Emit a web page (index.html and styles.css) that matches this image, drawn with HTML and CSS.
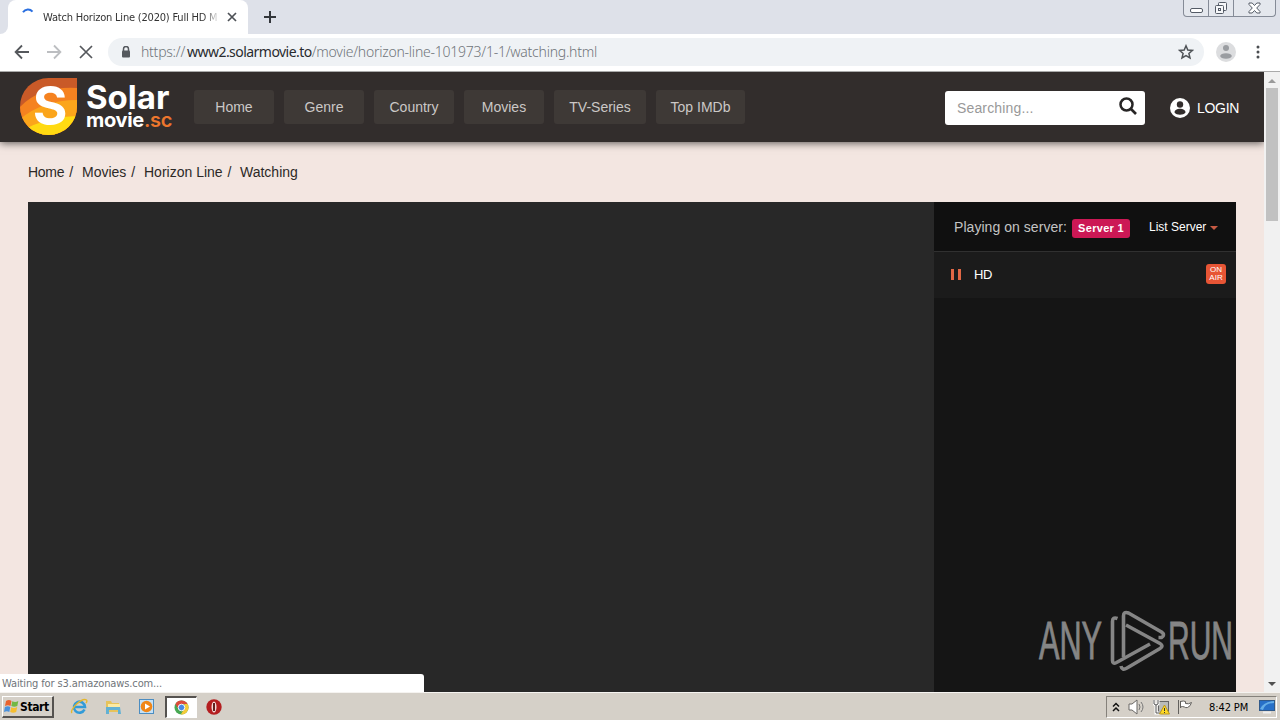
FILE: index.html
```html
<!DOCTYPE html>
<html lang="en">
<head>
    <meta charset="UTF-8">
    <meta name="viewport" content="width=device-width, initial-scale=1.0">
    <title>Watch Horizon Line (2020) Full HD Movie</title>
    <link rel="stylesheet" href="styles.css">
</head>
<body>
    <!-- Browser tabs -->
    <div class="tab-strip">
        <div class="tab-edge"></div>
        <div class="tab">
            <svg class="spinner" width="14" height="14" viewBox="0 0 14 14"><path d="M2 4.2A6 6 0 0 1 11.500 3.600" fill="none" stroke="#2a6fe0" stroke-width="2"/></svg>
            <span class="tab-title">Watch Horizon Line (2020) Full HD M</span>
            <svg width="10" height="10" viewBox="0 0 10 10"><path d="M1 1l8 8M9 1l-8 8" stroke="#4d5156" stroke-width="1.7"/></svg>
        </div>
        <svg class="new-tab" width="12" height="12" viewBox="0 0 12 12"><path d="M6 0v12M0 6h12" stroke="#33363b" stroke-width="2"/></svg>
        <div class="window-buttons">
            <span class="win-min"><svg width="13" height="6" viewBox="0 0 13 6"><rect x=".5" y=".5" width="12" height="4" rx="1.500" fill="#fff" stroke="#545b66"/></svg></span>
            <span class="win-max"><svg width="14" height="14" viewBox="0 0 14 14"><g fill="#f6f7f9" stroke="#545b66"><rect x="4.500" y="1.500" width="8" height="8" rx="1"/><rect x="1.500" y="4.500" width="8" height="8" rx="1"/><rect x="4.500" y="7.500" width="2" height="2"/></g></svg></span>
            <span class="win-close"><svg width="13" height="12" viewBox="0 0 13 12"><path d="M1 1h3.200l2.300 2.500L8.800 1H12v1.500L8.700 6 12 9.500V11H8.800L6.500 8.500 4.200 11H1V9.500L4.300 6 1 2.500z" fill="#fff" stroke="#545b66"/></svg></span>
        </div>
    </div>

    <!-- Address bar -->
    <div class="toolbar">
        <svg class="nav-icon" width="16" height="16" viewBox="0 0 16 16"><path d="M15 8H2M8 1.500L1.600 8 8 14.500" fill="none" stroke="#55585c" stroke-width="1.800"/></svg>
        <svg class="nav-icon" width="16" height="16" viewBox="0 0 16 16"><path d="M1 8h13M8 1.500L14.400 8 8 14.500" fill="none" stroke="#bcbec1" stroke-width="1.800"/></svg>
        <svg class="nav-icon" width="16" height="16" viewBox="0 0 16 16"><path d="M2 2l12 12M14 2L2 14" stroke="#55585c" stroke-width="1.700"/></svg>
        <div class="omnibox">
            <svg width="10" height="12" viewBox="0 0 10 12"><path d="M2.500 5V3a2.500 2.500 0 0 1 5 0v2" fill="none" stroke="#55595e" stroke-width="1.500"/><rect x="1" y="4.500" width="8" height="7" rx="1" fill="#55595e"/></svg>
            <span class="url">https://<b>www2.solarmovie.to</b>/movie/horizon-line-101973/1-1/watching.html</span>
            <svg class="star" width="16" height="16" viewBox="0 0 16 16"><path d="M8 1.800l1.800 4.200 4.600.4-3.500 3 1.100 4.500L8 11.500l-4 2.400 1.100-4.500-3.500-3 4.600-.4z" fill="none" stroke="#4f5357" stroke-width="1.500"/></svg>
        </div>
        <svg class="profile" width="20" height="20" viewBox="0 0 20 20"><circle cx="10" cy="10" r="10" fill="#dcdddf"/><circle cx="10" cy="6" r="3" fill="#9a9da1"/><ellipse cx="10" cy="14" rx="5.800" ry="2.800" fill="#9a9da1"/></svg>
        <svg class="menu-dots" width="4" height="14" viewBox="0 0 4 14"><g fill="#4a4d51"><circle cx="2" cy="2" r="1.500"/><circle cx="2" cy="7" r="1.500"/><circle cx="2" cy="12" r="1.500"/></g></svg>
    </div>

    <div class="viewport">
        <div class="page">
            <header class="header">
                <div class="logo">
                    <svg width="58" height="58" viewBox="0 0 58 58">
                        <defs>
                            <clipPath id="drop"><path d="M29.500 0H58v28.500A28.500 28.500 0 1 1 29.500 0z"/></clipPath>
                        </defs>
                        <g clip-path="url(#drop)">
                            <rect width="58" height="58" fill="#c95a28"/>
                            <path d="M0 30Q20 8 58 10v48H0z" fill="#f58220"/>
                            <path d="M0 42Q23 22 58 22v36H0z" fill="#fba51b"/>
                            <path d="M0 54Q29 38 58 38v20H0z" fill="#ffda12"/>
                        </g>
                        <text class="logo-letter" x="31" y="47" text-anchor="middle">S</text>
                    </svg>
                    <div class="logo-text">
                        <div class="logo-top">Solar</div>
                        <div class="logo-bottom">movie<span>.sc</span></div>
                    </div>
                </div>
                <nav class="nav">
                    <a>Home</a>
                    <a>Genre</a>
                    <a>Country</a>
                    <a>Movies</a>
                    <a class="wide">TV-Series</a>
                    <a class="imdb">Top IMDb</a>
                </nav>
                <div class="search">
                    <span>Searching...</span>
                    <svg width="18" height="18" viewBox="0 0 18 18"><circle cx="7.500" cy="7.500" r="6" fill="none" stroke="#272525" stroke-width="2.500"/><path d="M12 12l5 5" stroke="#272525" stroke-width="2.600"/></svg>
                </div>
                <div class="login">
                    <svg width="20" height="20" viewBox="0 0 20 20"><circle cx="10" cy="10" r="10" fill="#fff"/><circle cx="10" cy="6.500" r="3.200" fill="#322d2c"/><path d="M4.500 14.500c0-5 11-5 11 0-2 3-9 3-11 0z" fill="#322d2c"/></svg>
                    <span>LOGIN</span>
                </div>
            </header>

            <div class="breadcrumb">
                <span class="crumb-home">Home</span><span class="crumb-movies">Movies</span><span class="crumb-title">Horizon Line</span><span class="crumb-last">Watching</span>
            </div>

            <main class="player">
                <div class="video"></div>
                <aside class="servers">
                    <div class="server-head">
                        <span class="playing">Playing on server:</span>
                        <span class="badge">Server 1</span>
                        <span class="list-server">List Server</span>
                        <span class="caret"></span>
                    </div>
                    <div class="episode">
                        <span class="pause"></span>
                        <span class="quality">HD</span>
                        <span class="on-air">ON<br>AIR</span>
                    </div>
                </aside>
            </main>
        </div>
        <div class="scrollbar">
            <span class="arrow-up"></span>
            <div class="thumb"></div>
            <span class="arrow-down"></span>
        </div>

        <div class="status">Waiting for s3.amazonaws.com...</div>

        <svg class="watermark" width="198" height="64" viewBox="0 0 198 64">
            <g class="watermark-text">
                <text x="1" y="50" textLength="63" lengthAdjust="spacingAndGlyphs">ANY</text>
                <text x="130" y="50" textLength="65" lengthAdjust="spacingAndGlyphs">RUN</text>
            </g>
            <g fill="none" stroke="#858585" stroke-width="3.600" stroke-linejoin="round">
                <path d="M79.500 9.500q-5-2-5 3v39q0 4 4 2L112 35"/>
                <path d="M85.500 48V7q0-5 5-3l33 19q4 3 0 5.500l-3 0"/>
                <path d="M88 16l34 18.500q4 2.500 0 5L89 59q-5 3-6-2"/>
            </g>
        </svg>
    </div>

    <!-- Taskbar -->
    <div class="taskbar">
        <div class="start">
            <svg width="15" height="15" viewBox="0 0 15 15"><path d="M2 2q3-2 5.500 0L6.500 7Q4 5.500 1 7z" fill="#e9622d"/><path d="M8.300 2.300q3 1.500 6-.3l-1 5q-3 1.500-6 0z" fill="#73b844"/><path d="M.9 8q3-1.700 5.400 0l-1 5Q3 11.500 0 13z" fill="#4a91dc"/><path d="M7.200 8.300q3 1.500 6-.3l-1 5q-3 1.500-6 0z" fill="#f6be30"/></svg>
            <b>Start</b>
        </div>
        <div class="quick">
            <svg width="18" height="18" viewBox="0 0 18 18"><path d="M14.500 11.500A5.500 5.500 0 1 1 15 9H5" fill="none" stroke="#329bd8" stroke-width="2.600"/><path d="M2 15C-1 12 12-1 16.500 2q1 1-.5 3" fill="none" stroke="#e5b72c" stroke-width="1.400"/></svg>
            <svg width="18" height="18" viewBox="0 0 18 18"><path d="M2 3h5l1 2h7v9H2z" fill="#e6c35c"/><path d="M4 6h12v6H4z" fill="#fbeaa3"/><path d="M2 9h14l1 7h-3v-4H5v4H2z" fill="#62b1d4"/></svg>
            <svg width="18" height="18" viewBox="0 0 18 18"><rect x="1.500" y="1.500" width="14" height="14" fill="#c5e1f6" stroke="#4c8dc1"/><circle cx="8.500" cy="8.500" r="5.800" fill="#f08618"/><path d="M7 5.500L12 8.500 7 11.500z" fill="#fff"/></svg>
        </div>
        <div class="active-task">
            <svg width="15" height="15" viewBox="0 0 16 16"><circle cx="8" cy="8" r="7.500" fill="#47a852"/><path d="M1.500 4.200A7.500 7.500 0 0 1 14.500 4.300H8L5 10z" fill="#dd4b3b"/><path d="M14.500 4.300A7.500 7.500 0 0 1 7.200 15.400L11 9V4.300z" fill="#f4cb39"/><circle cx="8" cy="8" r="3.500" fill="#4889e4" stroke="#fff"/></svg>
        </div>
        <svg class="opera" width="16" height="16" viewBox="0 0 16 16"><circle cx="8" cy="8" r="7.700" fill="#b41e20"/><ellipse cx="8" cy="8" rx="2.500" ry="5.500" fill="#f3dcda"/><path d="M8 4v8" stroke="#63201f" stroke-width="2"/></svg>
        <div class="tray">
            <svg width="8" height="11" viewBox="0 0 8 11"><path d="M1 4.500l3-3 3 3M1 9l3-3 3 3" fill="none" stroke="#111" stroke-width="1.500"/></svg>
            <svg class="speaker" width="18" height="16" viewBox="0 0 18 16"><path d="M1 5h3l5-4v14l-5-4H1z" fill="#fff" stroke="#6b6966"/><path d="M11 5q2 3 0 6M13 3q4 5 0 10" fill="none" stroke="#777"/></svg>
            <svg class="network" width="17" height="16" viewBox="0 0 17 16"><rect x="5.500" y="2.500" width="10" height="10" fill="#b9bbb9" stroke="#666"/><path d="M1 1v4q2 2 4 0V1M3 6v8h5" fill="none" stroke="#fff" stroke-width="3"/><path d="M1 1v4q2 2 4 0V1M3 6v8h5" fill="none" stroke="#555"/><path d="M11.500 6l5 9h-10z" fill="#ffda25" stroke="#bb971d"/><path d="M11.500 9v3M11.500 13v1" stroke="#333"/></svg>
            <svg class="flag" width="17" height="16" viewBox="0 0 17 16"><path d="M1.500 1v14M3.500 2v7M3.500 2.500q3-1 5 0v2q3 1 6-1-1 4-4 5-2 .5-3-.5-2-1-4 0z" fill="#fff" stroke="#62605d"/></svg>
            <span class="clock">8:42 PM</span>
            <svg class="desktop" width="16" height="14" viewBox="0 0 16 14"><rect x=".5" y=".5" width="15" height="10" fill="#2870c8" stroke="#315a8a"/><path d="M1 9Q4 2 15 1v2Q6 3 4 10z" fill="#66aee7"/><path d="M4 12.500h8" stroke="#eee" stroke-width="2"/></svg>
        </div>
    </div>
</body>
</html>
```
FILE: styles.css
```css
* {
    box-sizing: border-box;
}
body {
    width: 1280px;
    height: 720px;
    margin: 0;
    overflow: hidden;
    font-family: "Liberation Sans", Arial, sans-serif;
    font-size: 14px;
    white-space: nowrap;
}
svg {
    display: block;
    flex-shrink: 0;
}

/* Browser */
.tab-strip {
    display: flex;
    height: 34px;
    background: #dee1e9;
}
.tab-edge {
    width: 8px;
    background: #fff;
}
.tab-edge::before {
    content: "";
    display: block;
    height: 34px;
    background: #dee1e9;
    border-bottom-right-radius: 8px;
}
.tab {
    display: flex;
    align-items: center;
    width: 240px;
    padding: 0 11px 0 13px;
    background: #fff;
    border-radius: 8px 8px 0 0;
}
.spinner {
    margin-bottom: 4px;
}
.tab-title {
    width: 176px;
    margin: 0 8px;
    overflow: hidden;
    font-family: "DejaVu Sans Condensed", "DejaVu Sans", sans-serif;
    font-size: 11px;
    font-stretch: condensed;
    letter-spacing: -0.2px;
    color: #333;
    -webkit-mask-image: linear-gradient(to right, #000 160px, transparent 177px);
    mask-image: linear-gradient(to right, #000 160px, transparent 177px);
}
.tab svg:last-child {
    margin-left: auto;
}
.new-tab {
    margin: 11px 0 0 16px;
}
.window-buttons {
    display: flex;
    height: 17px;
    margin: 0 4px 0 auto;
    border: 1px solid #858b97;
    border-top: 0;
    border-radius: 0 0 4px 4px;
    background: #e4e7ed;
}
.window-buttons span {
    display: flex;
    justify-content: center;
    align-items: center;
    width: 25px;
    border-right: 1px solid #858b97;
}
.window-buttons .win-min {
    align-items: flex-end;
    padding-bottom: 2px;
}
.window-buttons .win-close {
    width: 41px;
    border: 0;
}
.toolbar {
    display: flex;
    align-items: center;
    height: 38px;
    padding: 0 20px 2px 14px;
    background: #fff;
    border-bottom: 1px solid #aaa;
}
.nav-icon {
    margin-right: 16px;
}
.omnibox {
    display: flex;
    align-items: center;
    width: 1096px;
    height: 28px;
    margin-left: -2px;
    padding: 0 10px 0 13px;
    background: #eff2f5;
    border-radius: 14px;
}
.url {
    margin-left: 10px;
    font-family: "Noto Sans", sans-serif;
    font-size: 14px;
    font-weight: 300;
    letter-spacing: -0.24px;
    color: #70757a;
}
.url > b {
    margin-left: 2px;
    font-weight: 400;
    letter-spacing: -0.54px;
    color: #292b2e;
}
.star {
    margin-left: auto;
}
.profile {
    margin-left: 12px;
}
.menu-dots {
    margin-left: auto;
}

/* Page */
.viewport {
    position: relative;
    display: flex;
    height: 620px;
    background: #f3e6e1;
}
.page {
    width: 1264px;
    overflow: hidden;
}
.header {
    display: flex;
    align-items: center;
    height: 70px;
    padding: 0 25px 0 19px;
    background: #322d2c;
    box-shadow: 0 1px 8px rgba(0, 0, 0, 0.65);
}
.logo {
    display: flex;
    width: 175px;
}
.logo-letter {
    font: 700 53px Inter, sans-serif;
    fill: #fff;
}
.logo-text {
    margin-left: 9px;
    font-family: Inter, sans-serif;
    font-weight: 700;
    color: #fff;
}
.logo-top {
    height: 30px;
    font-size: 33px;
    line-height: 39px;
}
.logo-bottom {
    font-size: 20px;
    line-height: 24px;
    letter-spacing: -0.3px;
}
.logo-bottom span {
    font-weight: 600;
    color: #ed762d;
}
.nav {
    display: flex;
    gap: 10px;
}
.nav a {
    width: 80px;
    height: 34px;
    background: #3e3936;
    border-radius: 3px;
    font-size: 14px;
    line-height: 34px;
    text-align: center;
    color: #cbc8c6;
}
.nav .wide {
    width: 92px;
}
.nav .imdb {
    width: 89px;
}
.search {
    display: flex;
    align-items: center;
    width: 200px;
    height: 34px;
    margin: 2px 0 0 auto;
    padding: 0 8px 0 12px;
    background: #fff;
    border-radius: 3px;
    letter-spacing: 0.15px;
    color: #999;
}
.search svg {
    margin: -4px 0 0 auto;
}
.login {
    display: flex;
    align-items: center;
    gap: 7px;
    width: 69px;
    margin: 2px 0 0 25px;
    color: #fff;
    letter-spacing: -0.3px;
}
.breadcrumb {
    display: flex;
    height: 60px;
    padding-left: 28px;
    line-height: 60px;
    color: #2c2927;
}
.breadcrumb span:not(:last-child)::after {
    content: "/";
    margin-left: 5px;
}
.breadcrumb .crumb-home {
    width: 54px;
    letter-spacing: -0.3px;
}
.crumb-movies {
    width: 62px;
}
.crumb-title {
    width: 96px;
}
.player {
    display: flex;
    width: 1208px;
    height: 490px;
    margin-left: 28px;
}
.video {
    width: 906px;
    background: #282828;
}
.servers {
    width: 302px;
    background: #151515;
}
.server-head {
    display: flex;
    align-items: center;
    height: 50px;
    padding-left: 20px;
    background: #101010;
    border-bottom: 1px solid #303030;
    color: #c4c4c4;
}
.playing {
    width: 118px;
    letter-spacing: 0.05px;
}
.badge {
    width: 58px;
    height: 19px;
    margin-top: 3px;
    background: #cc1855;
    border-radius: 3px;
    font-size: 11px;
    font-weight: bold;
    line-height: 19px;
    letter-spacing: 0.3px;
    text-align: center;
    color: #fff;
}
.list-server {
    width: 59px;
    margin-left: 19px;
    font-size: 12px;
    color: #fff;
}
.caret {
    margin: 2px 0 0 2px;
    border: 4px solid transparent;
    border-top-color: #c65a43;
    border-bottom: 0;
}
.episode {
    display: flex;
    align-items: center;
    height: 46px;
    padding: 0 10px 2px 17px;
    background: #1b1b1b;
    color: #fff;
}
.pause {
    width: 10px;
    height: 11px;
    border: solid #e16745;
    border-width: 0 3px;
}
.quality {
    margin-left: 13px;
    font-size: 13px;
    letter-spacing: -0.3px;
}
.on-air {
    width: 20px;
    height: 20px;
    margin-left: auto;
    padding-top: 2px;
    background: #e75535;
    border-radius: 3px;
    font-size: 8px;
    line-height: 8px;
    text-align: center;
}
.scrollbar {
    display: flex;
    flex-direction: column;
    align-items: center;
    width: 16px;
    padding: 7px 0 6px;
    background: #f1f1f1;
}
.arrow-up,
.arrow-down {
    border: 4px solid transparent;
}
.arrow-up {
    border-top: 0;
    border-bottom-color: #9a9a9a;
}
.arrow-down {
    margin-top: auto;
    border-top-color: #505050;
    border-bottom: 0;
}
.thumb {
    width: 12px;
    height: 133px;
    margin-top: 5px;
    background: #c1c1c1;
}
.status {
    position: absolute;
    bottom: 0;
    left: 0;
    width: 424px;
    height: 18px;
    padding-left: 2px;
    background: #fff;
    border-top-right-radius: 3px;
    font-family: "DejaVu Sans Condensed", "DejaVu Sans", sans-serif;
    font-size: 11px;
    font-stretch: condensed;
    line-height: 19px;
    letter-spacing: -0.12px;
    color: #70757a;
}
.watermark {
    position: absolute;
    top: 537px;
    left: 1038px;
}
.watermark-text {
    font-family: "Liberation Sans", Arial, sans-serif;
    font-size: 53px;
    fill: #858585;
    stroke: #858585;
    stroke-width: 0.9px;
}

/* Taskbar */
.taskbar {
    display: flex;
    align-items: center;
    height: 28px;
    padding: 1px 3px 0 2px;
    background: #d5d0c8;
    border-top: 1px solid #f5f3f0;
    font-family: "DejaVu Sans Condensed", "DejaVu Sans", sans-serif;
    font-size: 11px;
    font-stretch: condensed;
}
.start {
    display: flex;
    align-items: center;
    gap: 1px;
    width: 52px;
    height: 22px;
    padding-left: 1px;
    border: 1px solid #fff;
    border-right: 2px solid #55524f;
    border-bottom: 2px solid #55524f;
    font-size: 12px;
    letter-spacing: -0.4px;
}
.quick {
    display: flex;
    gap: 16px;
    margin-left: 16px;
}
.active-task {
    display: flex;
    justify-content: center;
    align-items: center;
    width: 32px;
    height: 22px;
    margin-left: 9px;
    background: #fff;
    border: 1px solid #fff;
    border-top: 2px solid #55524f;
    border-left: 2px solid #55524f;
}
.opera {
    margin-left: 9px;
}
.tray {
    display: flex;
    align-items: center;
    width: 171px;
    height: 22px;
    margin-left: auto;
    padding-left: 5px;
    border: 1px solid #fff;
    border-top-color: #85817b;
    border-left-color: #85817b;
}
.speaker {
    margin-left: 8px;
}
.network {
    margin-left: 7px;
}
.flag {
    margin-left: 7px;
}
.clock {
    width: 41px;
    margin-left: 15px;
    letter-spacing: -0.1px;
}
.desktop {
    margin-left: 9px;
}
```
